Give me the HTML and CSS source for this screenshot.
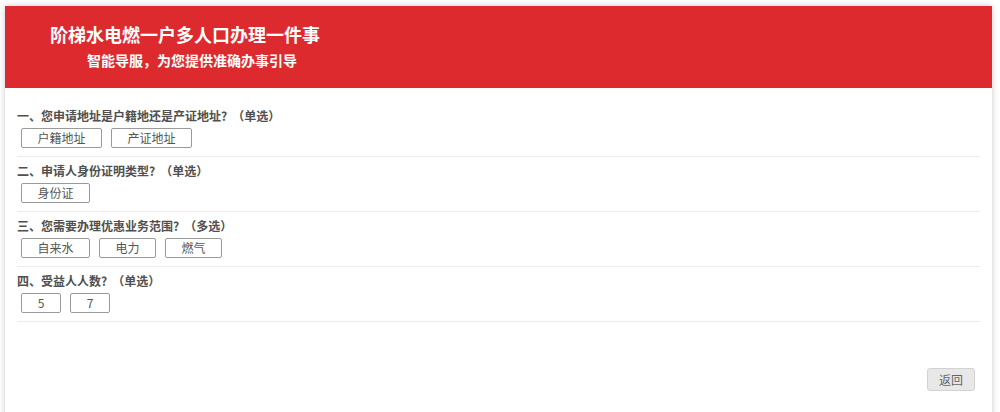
FILE: index.html
```html
<!DOCTYPE html>
<html lang="zh-CN">
<head>
<meta charset="utf-8">
<title>阶梯水电燃一户多人口办理一件事</title>
<link rel="stylesheet" href="styles.css">
</head>
<body>
<div class="card">
  <header class="banner">
    <h1 class="banner-title">阶梯水电燃一户多人口办理一件事</h1>
    <p class="banner-sub">智能导服，为您提供准确办事引导</p>
  </header>
  <main class="content">
    <section class="question">
      <div class="q-title">一、您申请地址是户籍地还是产证地址?<span class="note">（单选）</span></div>
      <div class="options">
        <button class="opt">户籍地址</button>
        <button class="opt">产证地址</button>
      </div>
    </section>
    <section class="question">
      <div class="q-title">二、申请人身份证明类型?<span class="note">（单选）</span></div>
      <div class="options">
        <button class="opt">身份证</button>
      </div>
    </section>
    <section class="question">
      <div class="q-title">三、您需要办理优惠业务范围?<span class="note">（多选）</span></div>
      <div class="options">
        <button class="opt">自来水</button>
        <button class="opt">电力</button>
        <button class="opt">燃气</button>
      </div>
    </section>
    <section class="question">
      <div class="q-title">四、受益人人数?<span class="note">（单选）</span></div>
      <div class="options">
        <button class="opt">5</button>
        <button class="opt">7</button>
      </div>
    </section>
    <div class="footer">
      <button class="back">返回</button>
    </div>
  </main>
</div>
</body>
</html>
```

FILE: styles.css
```css
html, body {
  margin: 0;
  padding: 0;
  background: #ffffff;
  font-family: "Noto Sans CJK SC", "Noto Sans", sans-serif;
}

body {
  padding: 6px 8px 0 5px;
  height: 412px;
  box-sizing: border-box;
  overflow: hidden;
}

.card {
  background: #ffffff;
  box-shadow: 0 0 6px rgba(0, 0, 0, 0.22);
  height: 420px;
}

.banner {
  background: #dd2a2e;
  height: 82px;
  box-sizing: border-box;
  padding: 15px 0 0 45px;
  color: #ffffff;
}

.banner-title {
  margin: 0;
  font-size: 18px;
  font-weight: 700;
  line-height: 26px;
}

.banner-sub {
  margin: 3px 0 0 37px;
  font-size: 14px;
  font-weight: 700;
  line-height: 20px;
}

.content {
  padding: 14px 12px 0 12px;
}

.question {
  padding: 6px 0 8px 0;
  border-bottom: 1px solid #ececec;
  display: flex;
  flex-direction: column;
  gap: 4px;
}

.q-title {
  font-size: 12px;
  font-weight: 700;
  color: #505050;
  line-height: 16px;
}

.note {
  margin-left: 5px;
}

.options {
  display: flex;
  gap: 9px;
  padding-left: 4px;
}

.opt {
  height: 20px;
  min-width: 40px;
  padding: 0 15.5px;
  border: 1px solid #9a9a9a;
  border-radius: 2px;
  background: #ffffff;
  color: #555555;
  font-family: inherit;
  font-size: 12px;
  line-height: 18px;
}

.footer {
  display: flex;
  justify-content: flex-end;
  padding: 46px 5px 0 0;
}

.back {
  width: 48px;
  height: 23px;
  padding: 0;
  border: 1px solid #d2d2d2;
  border-radius: 3px;
  background: #e8e8e8;
  color: #666666;
  font-family: inherit;
  font-size: 12px;
  line-height: 21px;
}
```
